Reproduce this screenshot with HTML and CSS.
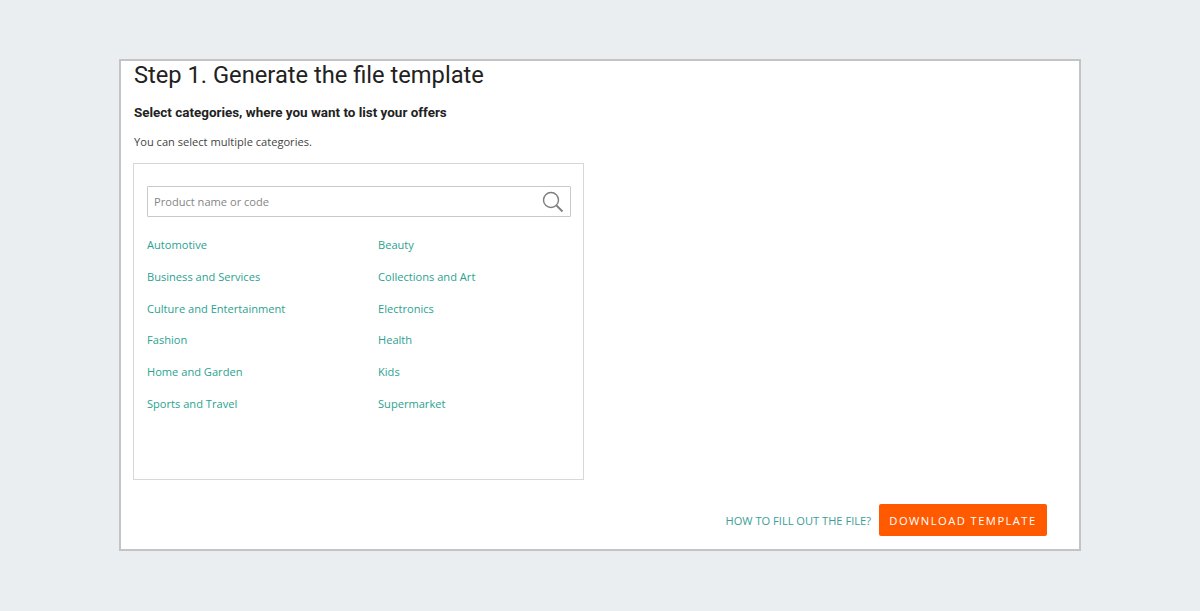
FILE: index.html
```html
<!DOCTYPE html>
<html lang="en">
<head>
<meta charset="utf-8">
<title>Generate the file template</title>
<link rel="stylesheet" href="styles.css">
</head>
<body>
<main class="frame">
  <h1 class="title">Step 1. Generate the file template</h1>
  <h2 class="subtitle">Select categories, where you want to list your offers</h2>
  <p class="hint">You can select multiple categories.</p>
  <section class="panel">
    <div class="search">
      <span class="placeholder">Product name or code</span>
      <svg class="search-icon" width="22" height="22" viewBox="0 0 22 22" fill="none" stroke="#7d7d7d" aria-hidden="true">
        <circle cx="9" cy="9" r="7.5" stroke-width="1.4"/>
        <path d="M14.5 14.5 L20.5 20.5" stroke-width="1.8"/>
      </svg>
    </div>
    <ul class="cats">
      <li>Automotive</li><li>Beauty</li>
      <li>Business and Services</li><li>Collections and Art</li>
      <li>Culture and Entertainment</li><li>Electronics</li>
      <li>Fashion</li><li>Health</li>
      <li>Home and Garden</li><li>Kids</li>
      <li>Sports and Travel</li><li>Supermarket</li>
    </ul>
  </section>
  <footer class="actions">
    <a class="howto">HOW TO FILL OUT THE FILE?</a>
    <button class="download">DOWNLOAD TEMPLATE</button>
  </footer>
</main>
</body>
</html>
```
FILE: styles.css
```css
* { box-sizing: border-box; }
html, body { margin: 0; height: 611px; overflow: hidden; }
body {
  background: #eaeef1;
  padding: 59px 119px;
  font-family: "Open Sans", sans-serif;
}
.frame {
  width: 962px;
  height: 492px;
  background: #fff;
  border: 2px solid #c3c4c6;
  padding: 0 32px 0 13px;
}
.title {
  margin: 0;
  font: 400 23.7px/28px Roboto, sans-serif;
  color: #222;
}
.subtitle {
  margin: 14px 0 0;
  font: 700 13.45px/20px Roboto, sans-serif;
  color: #222;
}
.hint {
  margin: 9px 0 0;
  font-size: 11.1px;
  line-height: 20px;
  color: #444;
}
.panel {
  margin: 11px 0 0 -1px;
  width: 451px;
  height: 317px;
  border: 1px solid #d8d8d8;
  padding: 22px 12px 0 13px;
}
.search {
  display: flex;
  align-items: center;
  justify-content: space-between;
  height: 31px;
  border: 1px solid #c9c9c9;
  border-radius: 1px;
  padding: 0 6px;
}
.placeholder { font-size: 11.1px; color: #858585; }
.search-icon { display: block; }
.cats {
  list-style: none;
  margin: 12px 0 0;
  padding: 0;
  display: grid;
  grid-template-columns: 231px 1fr;
  grid-auto-rows: 31.75px;
  font-size: 11.1px;
  line-height: 31.75px;
  color: #2aa28f;
}
.actions {
  display: flex;
  justify-content: flex-end;
  align-items: center;
  gap: 8px;
  margin-top: 24px;
}
.howto { font-size: 11.1px; color: #3a9e96; }
.download {
  width: 168px;
  height: 32px;
  border: 0;
  border-radius: 2px;
  background: #ff5a00;
  color: #fff;
  font: 400 11.2px "Open Sans", sans-serif;
  letter-spacing: 1.45px;
  white-space: nowrap;
  padding: 0;
}
```
